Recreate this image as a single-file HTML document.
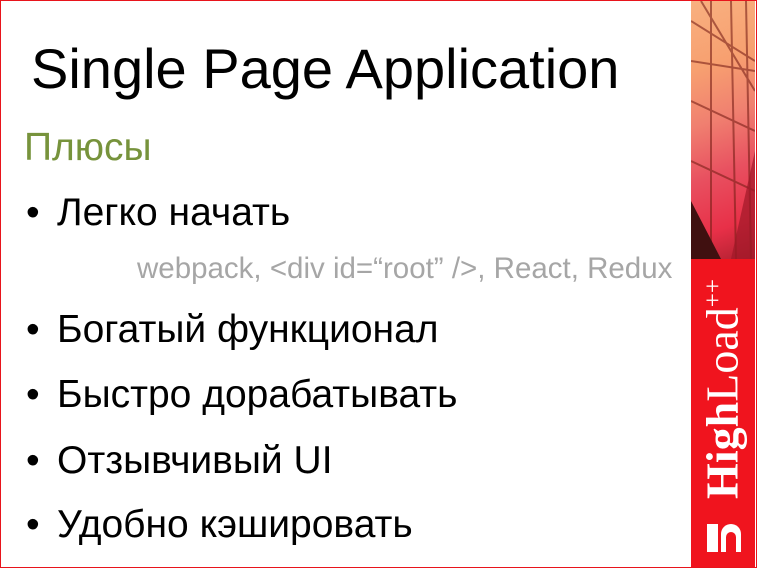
<html><head><style>
body{margin:0;width:757px;height:568px;overflow:hidden;background:#fff;font-family:"Liberation Sans",sans-serif;position:relative}
.frame{position:absolute;left:0;top:0;width:755px;height:566px;border:1px solid #e8141c}
.strip{position:absolute;left:691px;top:1px;width:64px;height:566px;background:#f0141e}
.img{position:absolute;left:0;top:0;width:64px;height:258px;background:linear-gradient(160deg,#f8b080 0%,#f7a070 25%,#f08070 45%,#e85060 65%,#e83048 85%,#b02030 100%);overflow:hidden}
.t{position:absolute;white-space:nowrap;color:#000}
.b{font-size:39px}
.b span{position:absolute;left:31px}
</style></head><body>
<div class="frame"></div>
<div class="strip">
<div class="img">
<svg width="64" height="258"><g stroke="#7a2018" stroke-width="2" opacity=".6" fill="none">
<path d="M0 20 L64 60 M10 0 L64 90 M0 100 L64 130 M20 0 L20 258 M40 0 L45 258 M0 160 L64 190 M0 60 L64 70 M55 0 L60 258"/></g>
<path d="M0 258 L0 200 L30 258Z" fill="#401010"/><path d="M64 150 L64 258 L40 258Z" fill="#a01828" opacity=".7"/></svg>
</div>
<div style="position:absolute;left:31px;top:388px;transform:translate(-50%,-50%) rotate(-90deg);color:#fff;font-family:'Liberation Serif',serif;font-size:46px;white-space:nowrap"><b>High</b>Load<sup style="font-size:25px">++</sup></div>
<div style="position:absolute;left:16px;top:523px;width:11px;height:28px;background:#fff"></div>
<div style="position:absolute;left:30px;top:523px;width:20px;height:28px;background:#fff;border-radius:10px 10px 0 0"></div>
<div style="position:absolute;left:35px;top:531px;width:10px;height:20px;background:#f0141e;border-radius:5px 5px 0 0"></div>
</div>
<div class="t" style="left:31px;top:36px;font-size:56px">Single Page Application</div>
<div class="t" style="left:24px;top:126px;font-size:39px;color:#77933c">Плюсы</div>
<div class="t b" style="left:26px;top:191px">•<span>Легко начать</span></div>
<div class="t" style="left:137px;top:252px;font-size:29.5px;color:#a6a6a6">webpack, &lt;div id=“root” /&gt;, React, Redux</div>
<div class="t b" style="left:26px;top:308px">•<span>Богатый функционал</span></div>
<div class="t b" style="left:26px;top:373px">•<span>Быстро дорабатывать</span></div>
<div class="t b" style="left:26px;top:439px">•<span>Отзывчивый UI</span></div>
<div class="t b" style="left:26px;top:503px">•<span>Удобно кэшировать</span></div>
</body></html>
